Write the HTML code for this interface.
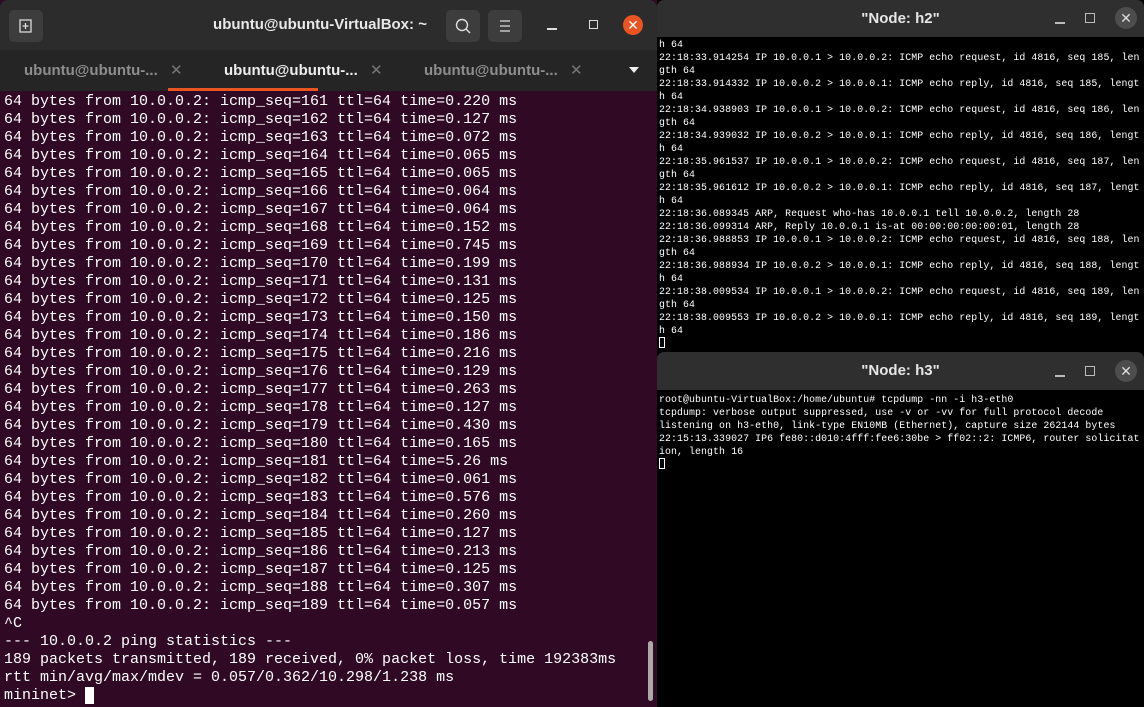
<!DOCTYPE html>
<html><head><meta charset="utf-8"><style>
*{margin:0;padding:0;box-sizing:border-box}
body{width:1144px;height:707px;overflow:hidden;background:#3a3a3a;position:relative;font-family:"Liberation Sans",sans-serif}
#L{position:absolute;left:0;top:0;width:657px;height:707px;background:#300a24}
#hdr{position:absolute;left:0;top:0;width:657px;height:50px;background:#2c2c2c;border-radius:8px 8px 0 0}
#tabs{position:absolute;left:0;top:50px;width:657px;height:41px;background:#252525}
.tab{position:absolute;top:0;height:41px;width:200px;color:#8e8e8e;font-weight:bold;font-size:15px;line-height:41px;padding-left:24px}
.tab .x{position:absolute;left:170px;font-weight:normal;color:#777}
.btn{position:absolute;top:10px;width:34px;height:32px;background:#3d3d3d;border-radius:5px}
#lb{position:absolute;left:4px;top:93px;font-family:"Liberation Mono",monospace;font-size:15px;line-height:18px;color:#fff;white-space:pre}
.xt{position:absolute;left:657px;width:487px;background:#000}
.tb{position:absolute;left:0;width:487px;background:#2f2f2f;color:#e6e6e6;font-weight:bold;font-size:15px;text-align:center;border-radius:7px 7px 0 0}
.tx{position:absolute;left:2px;font-family:"Liberation Mono",monospace;font-size:9.9px;letter-spacing:0.08px;line-height:13px;color:#fff;white-space:pre}
.cl{position:absolute;width:22px;height:22px;border-radius:50%;background:#4d4d4d;color:#ddd;text-align:center;line-height:22px;font-size:14px;font-weight:normal}
.cur{display:inline-block;width:6px;height:11px;border:1px solid #fff;vertical-align:-2px}
</style></head><body>
<div id="L">
<div id="hdr">
<div class="btn" style="left:9px;"><svg width="34" height="32"><path d="M11 10h11v12H11z" fill="none" stroke="#ddd" stroke-width="1.3"/><path d="M16.5 13v6M13.5 16h6" stroke="#ddd" stroke-width="1.3"/></svg></div>
<div style="position:absolute;left:210px;width:220px;top:16px;text-align:center;color:#e8e8e8;font-weight:bold;font-size:15px">ubuntu@ubuntu-VirtualBox: ~</div>
<div class="btn" style="left:446px"><svg width="34" height="32"><circle cx="16" cy="15" r="5.5" fill="none" stroke="#ddd" stroke-width="1.4"/><path d="M20 19l4 4" stroke="#ddd" stroke-width="1.5"/></svg></div>
<div class="btn" style="left:488px"><svg width="34" height="32"><path d="M12 11h10M12 16h10M12 21h10" stroke="#ddd" stroke-width="1.3"/></svg></div>
<div style="position:absolute;left:547px;top:28px;width:10px;height:1.5px;background:#ddd"></div>
<div style="position:absolute;left:589px;top:20px;width:9px;height:9px;border:1.4px solid #ddd"></div>
<div style="position:absolute;left:623px;top:15px;width:20px;height:20px;border-radius:50%;background:#e95420;color:#fff;text-align:center;line-height:20px;font-size:14px">✕</div>
</div>
<div id="tabs">
<div class="tab" style="left:0">ubuntu@ubuntu-...<span class="x">✕</span></div>
<div class="tab" style="left:200px;color:#eee">ubuntu@ubuntu-...<span class="x">✕</span></div>
<div class="tab" style="left:400px">ubuntu@ubuntu-...<span class="x">✕</span></div>
<div style="position:absolute;left:629px;top:17px;border:5px solid transparent;border-top:6px solid #eee"></div>
</div>
<div style="position:absolute;left:168px;top:88px;width:150px;height:3px;background:#e95420"></div>
<div id="lb">64 bytes from 10.0.0.2: icmp_seq=161 ttl=64 time=0.220 ms
64 bytes from 10.0.0.2: icmp_seq=162 ttl=64 time=0.127 ms
64 bytes from 10.0.0.2: icmp_seq=163 ttl=64 time=0.072 ms
64 bytes from 10.0.0.2: icmp_seq=164 ttl=64 time=0.065 ms
64 bytes from 10.0.0.2: icmp_seq=165 ttl=64 time=0.065 ms
64 bytes from 10.0.0.2: icmp_seq=166 ttl=64 time=0.064 ms
64 bytes from 10.0.0.2: icmp_seq=167 ttl=64 time=0.064 ms
64 bytes from 10.0.0.2: icmp_seq=168 ttl=64 time=0.152 ms
64 bytes from 10.0.0.2: icmp_seq=169 ttl=64 time=0.745 ms
64 bytes from 10.0.0.2: icmp_seq=170 ttl=64 time=0.199 ms
64 bytes from 10.0.0.2: icmp_seq=171 ttl=64 time=0.131 ms
64 bytes from 10.0.0.2: icmp_seq=172 ttl=64 time=0.125 ms
64 bytes from 10.0.0.2: icmp_seq=173 ttl=64 time=0.150 ms
64 bytes from 10.0.0.2: icmp_seq=174 ttl=64 time=0.186 ms
64 bytes from 10.0.0.2: icmp_seq=175 ttl=64 time=0.216 ms
64 bytes from 10.0.0.2: icmp_seq=176 ttl=64 time=0.129 ms
64 bytes from 10.0.0.2: icmp_seq=177 ttl=64 time=0.263 ms
64 bytes from 10.0.0.2: icmp_seq=178 ttl=64 time=0.127 ms
64 bytes from 10.0.0.2: icmp_seq=179 ttl=64 time=0.430 ms
64 bytes from 10.0.0.2: icmp_seq=180 ttl=64 time=0.165 ms
64 bytes from 10.0.0.2: icmp_seq=181 ttl=64 time=5.26 ms
64 bytes from 10.0.0.2: icmp_seq=182 ttl=64 time=0.061 ms
64 bytes from 10.0.0.2: icmp_seq=183 ttl=64 time=0.576 ms
64 bytes from 10.0.0.2: icmp_seq=184 ttl=64 time=0.260 ms
64 bytes from 10.0.0.2: icmp_seq=185 ttl=64 time=0.127 ms
64 bytes from 10.0.0.2: icmp_seq=186 ttl=64 time=0.213 ms
64 bytes from 10.0.0.2: icmp_seq=187 ttl=64 time=0.125 ms
64 bytes from 10.0.0.2: icmp_seq=188 ttl=64 time=0.307 ms
64 bytes from 10.0.0.2: icmp_seq=189 ttl=64 time=0.057 ms
^C
--- 10.0.0.2 ping statistics ---
189 packets transmitted, 189 received, 0% packet loss, time 192383ms
rtt min/avg/max/mdev = 0.057/0.362/10.298/1.238 ms
mininet&gt; <span style="background:#fff">&nbsp;</span></div>
<div style="position:absolute;left:648px;top:641px;width:5px;height:60px;background:#aaa;border-radius:3px"></div>
</div>

<div class="xt" style="top:0;height:352px">
<div class="tb" style="top:0;height:37px;line-height:37px">"Node: h2"
<div style="position:absolute;left:398px;top:22px;width:10px;height:1.5px;background:#bbb"></div>
<div style="position:absolute;left:428px;top:13px;width:10px;height:10px;border:1.3px solid #bbb"></div>
<div class="cl" style="left:458px;top:7px">✕</div></div>
<div class="tx" style="top:38px">h 64
22:18:33.914254 IP 10.0.0.1 &gt; 10.0.0.2: ICMP echo request, id 4816, seq 185, len
gth 64
22:18:33.914332 IP 10.0.0.2 &gt; 10.0.0.1: ICMP echo reply, id 4816, seq 185, lengt
h 64
22:18:34.938903 IP 10.0.0.1 &gt; 10.0.0.2: ICMP echo request, id 4816, seq 186, len
gth 64
22:18:34.939032 IP 10.0.0.2 &gt; 10.0.0.1: ICMP echo reply, id 4816, seq 186, lengt
h 64
22:18:35.961537 IP 10.0.0.1 &gt; 10.0.0.2: ICMP echo request, id 4816, seq 187, len
gth 64
22:18:35.961612 IP 10.0.0.2 &gt; 10.0.0.1: ICMP echo reply, id 4816, seq 187, lengt
h 64
22:18:36.089345 ARP, Request who-has 10.0.0.1 tell 10.0.0.2, length 28
22:18:36.099314 ARP, Reply 10.0.0.1 is-at 00:00:00:00:00:01, length 28
22:18:36.988853 IP 10.0.0.1 &gt; 10.0.0.2: ICMP echo request, id 4816, seq 188, len
gth 64
22:18:36.988934 IP 10.0.0.2 &gt; 10.0.0.1: ICMP echo reply, id 4816, seq 188, lengt
h 64
22:18:38.009534 IP 10.0.0.1 &gt; 10.0.0.2: ICMP echo request, id 4816, seq 189, len
gth 64
22:18:38.009553 IP 10.0.0.2 &gt; 10.0.0.1: ICMP echo reply, id 4816, seq 189, lengt
h 64
<span class="cur"></span></div>
</div>

<div class="xt" style="top:352px;height:355px">
<div class="tb" style="top:0;height:38px;line-height:38px">"Node: h3"
<div style="position:absolute;left:398px;top:23px;width:10px;height:1.5px;background:#bbb"></div>
<div style="position:absolute;left:428px;top:14px;width:10px;height:10px;border:1.3px solid #bbb"></div>
<div class="cl" style="left:458px;top:8px">✕</div></div>
<div class="tx" style="top:41px">root@ubuntu-VirtualBox:/home/ubuntu# tcpdump -nn -i h3-eth0
tcpdump: verbose output suppressed, use -v or -vv for full protocol decode
listening on h3-eth0, link-type EN10MB (Ethernet), capture size 262144 bytes
22:15:13.339027 IP6 fe80::d010:4fff:fee6:30be &gt; ff02::2: ICMP6, router solicitat
ion, length 16
<span class="cur"></span></div>
</div>
</body></html>
